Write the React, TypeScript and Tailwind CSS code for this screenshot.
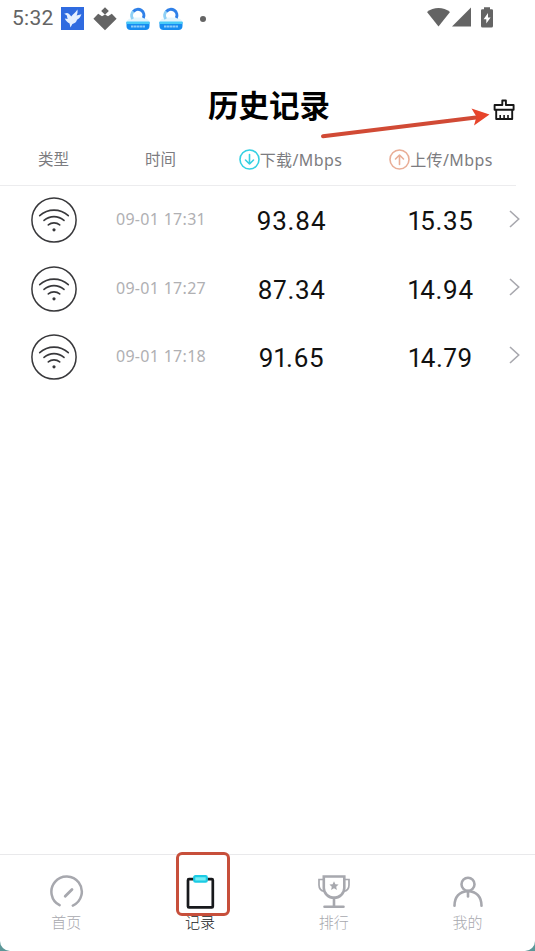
import type { ReactNode } from 'react';

interface SpeedRecord {
  id: number;
  time: string;
  download: string;
  upload: string;
}

const records: SpeedRecord[] = [
  { id: 1, time: '09-01 17:31', download: '93.84', upload: '15.35' },
  { id: 2, time: '09-01 17:27', download: '87.34', upload: '14.94' },
  { id: 3, time: '09-01 17:18', download: '91.65', upload: '14.79' },
];

function BirdIcon() {
  return (
    <svg className="w-[23px] h-[23px]" viewBox="0 0 23 23">
      <rect width="23" height="23" fill="#2f6be0" />
      <path
        d="M3.2 6.8L5.8 6.1C7.6 6.2 8.6 7.8 10.2 9.4C11.6 7.2 14.4 5.6 16.4 2.4C16.8 4.6 16.6 6.4 15.6 8.6L20.4 7.2C19.6 9.6 18.4 11.4 16 12.8C15.4 15 14 16.4 11.4 17L9.4 20.6L8.6 16.4C6.2 15.4 4.6 13.8 3.8 11.6L6.8 12C6 10.4 6.2 9.2 5.6 8.2Z"
        fill="#e4efff"
      />
    </svg>
  );
}

function DiamondIcon() {
  return (
    <svg className="w-[24px] h-[24px]" viewBox="0 0 24 24" fill="#646464">
      <path d="M12 0.2L15.8 4L12 7.8L8.2 4Z" />
      <path d="M5.2 6.8L9 9.2L12 7.4L15 9.2L18.8 6.8L23.6 11.8L12 23.3L0.4 11.8Z" />
    </svg>
  );
}

function CleanerIcon() {
  return (
    <svg className="w-[24px] h-[24px]" viewBox="0 0 24 24">
      <path d="M0.8 15.5C0.8 12 4 10.5 12 10.5C20 10.5 23.2 12 23.2 15.5Z" fill="#e3f5fd" />
      <path d="M6.7 12A5.9 5.9 0 0 1 7.6 4.2" fill="none" stroke="#8fd0f5" strokeWidth="3" />
      <path d="M7.4 4.4A6 6 0 0 1 17.3 11" fill="none" stroke="#2f80e8" strokeWidth="3" />
      <path d="M0.5 15H23.5V19C23.5 21.8 22 23 19.5 23H4.5C2 23 0.5 21.8 0.5 19Z" fill="#168cf0" />
      <path d="M0.5 14.5H23.5V17H0.5Z" fill="#48cbf8" />
      <path d="M5 19.6H19" stroke="#8accfa" strokeWidth="2" strokeDasharray="2.6 0.4" />
    </svg>
  );
}

function StatusBar() {
  return (
    <div className="flex h-[37px] items-center pl-3 pr-10">
      <span className="w-[49px] text-[21px] leading-none tracking-[0.3px] text-[#646464] font-['Roboto',sans-serif]">
        5:32
      </span>
      <div className="flex items-center gap-[9px]">
        <BirdIcon />
        <DiamondIcon />
        <CleanerIcon />
        <CleanerIcon />
      </div>
      <span className="ml-[17px] h-[6px] w-[6px] rounded-full bg-[#646464]" />
      <div className="ml-auto flex items-center pb-[3px]">
        <svg className="w-[23px] h-[20px]" viewBox="0 0 23 20" fill="#646464">
          <path d="M0 5C6.5-0.5 16.5-0.5 23 5L11.5 19.5Z" />
        </svg>
        <svg className="ml-[2px] w-[19px] h-[20px]" viewBox="0 0 19 20" fill="#646464">
          <path d="M19 0.5V19.5H0Z" />
        </svg>
        <svg className="ml-[10px] mr-[2px] w-[12px] h-[21px]" viewBox="0 0 12 21">
          <path
            d="M3 0.3H9V2.2H10.8Q12 2.2 12 3.4V19Q12 20.5 10.5 20.5H1.5Q0 20.5 0 19V3.4Q0 2.2 1.2 2.2H3Z"
            fill="#646464"
          />
          <path d="M7 6L2.6 12.2H5.3V16.6L9.6 10.5H7Z" fill="#fff" />
        </svg>
      </div>
    </div>
  );
}

function BroomIcon() {
  return (
    <svg
      className="w-[22px] h-[22px]"
      viewBox="0 0 22 22"
      fill="none"
      stroke="#171717"
      strokeWidth="1.9"
      strokeLinejoin="round"
    >
      <path d="M9.3 6V1.5H12.9V6H20.6V10.8H1.6V6Z" />
      <path d="M3.2 10.8V20H19.2V10.8" />
      <path d="M7.2 19.5V16M11.1 19.5V16M15 19.5V16" strokeWidth="1.6" />
    </svg>
  );
}

function DirectionIcon({ up }: { up?: boolean }) {
  return (
    <svg
      className="w-[21px] h-[21px] shrink-0"
      viewBox="0 0 21 21"
      fill="none"
      stroke={up ? '#e9ae97' : '#35d0e2'}
      strokeWidth="1.6"
      strokeLinecap="round"
      strokeLinejoin="round"
    >
      <circle cx="10.5" cy="10.5" r="9.5" />
      {up ? (
        <path d="M10.5 15.5V6M6.5 10L10.5 6L14.5 10" />
      ) : (
        <path d="M10.5 5.5V15M6.5 11L10.5 15L14.5 11" />
      )}
    </svg>
  );
}

function WifiBadge() {
  return (
    <svg className="w-[46px] h-[46px]" viewBox="0 0 46 46" fill="none" stroke="#38383b">
      <circle cx="23" cy="23" r="22.1" strokeWidth="1.5" />
      <g strokeWidth="1.6" strokeLinecap="round">
        <path d="M8.7 18.6C17 11.3 29 11.3 37.3 18.6" />
        <path d="M13 23.4C19 18.4 27 18.4 33 23.4" />
        <path d="M17.3 27.9C20.5 25.2 25.5 25.2 28.7 27.9" />
      </g>
      <circle cx="23" cy="32.8" r="1.6" fill="#38383b" stroke="none" />
    </svg>
  );
}

function RecordRow({ record }: { record: SpeedRecord }) {
  return (
    <li className="flex h-[68.4px] items-center">
      <div className="flex w-[107px] justify-center">
        <WifiBadge />
      </div>
      <span className="mb-[2px] w-[108px] text-center text-[16px] leading-5 tracking-[0.3px] whitespace-nowrap text-[#b0b0b3] font-['Noto_Sans',sans-serif]">
        {record.time}
      </span>
      <span className="mt-[2px] w-[153px] text-center text-[26px] leading-8 tracking-[0.65px] proportional-nums text-[#111] font-['Roboto',sans-serif]">
        {record.download}
      </span>
      <span className="mt-[2px] w-[146px] text-center text-[26px] leading-8 tracking-[0.65px] proportional-nums text-[#111] font-['Roboto',sans-serif]">
        {record.upload}
      </span>
      <svg
        className="mb-[3px] ml-[-5px] w-[11px] h-[18px]"
        viewBox="0 0 11 18"
        fill="none"
        stroke="#a8a8ae"
        strokeWidth="1.6"
      >
        <path d="M1 1L9.7 9L1 17" />
      </svg>
    </li>
  );
}

interface TabProps {
  label: string;
  active?: boolean;
  children: ReactNode;
}

function Tab({ label, active, children }: TabProps) {
  return (
    <button
      className={`flex flex-1 flex-col items-center pt-[19px] ${
        active ? 'text-[#17191c]' : 'text-[#a7a8ae]'
      }`}
    >
      <svg className="w-[34px] h-[36px]" viewBox="0 0 34 36" fill="none" stroke="currentColor">
        {children}
      </svg>
      <span className="mt-[2px] mr-[1px] text-[15px] leading-5 font-light">{label}</span>
    </button>
  );
}

export default function App() {
  return (
    <div className="h-[951px] w-[535px] overflow-hidden bg-[#5b9798] font-['Noto_Sans','Noto_Sans_CJK_SC',sans-serif]">
      <div className="relative flex h-full flex-col rounded-b-[10px] bg-white">
        <StatusBar />

        <header className="grid h-[104px] grid-cols-[1fr_auto_1fr] pt-[46px] pr-[20px]">
          <h1 className="col-start-2 ml-[23px] text-[30.5px] leading-[44px] font-bold text-black">历史记录</h1>
          <button className="mt-[16px] h-[22px] justify-self-end">
            <BroomIcon />
          </button>
        </header>

        {/* Column titles */}
        <div className="mr-[19px] flex h-[45px] items-center border-b border-[#ececee] pb-[7px] text-[15.5px] text-[#7c7c80]">
          <span className="w-[107px] text-center">类型</span>
          <span className="w-[107px] text-center">时间</span>
          <div className="flex w-[153px] items-center justify-center">
            <DirectionIcon />
            <span className="text-[16px] tracking-[0.4px]">下载/Mbps</span>
          </div>
          <div className="flex w-[148px] items-center justify-center">
            <DirectionIcon up />
            <span className="text-[16px] tracking-[0.4px]">上传/Mbps</span>
          </div>
        </div>

        <ul>
          {records.map((record) => (
            <RecordRow key={record.id} record={record} />
          ))}
        </ul>

        {/* Bottom tabs */}
        <nav className="mt-auto flex h-[97px] border-t border-[#e9e9eb]">
          <Tab label="首页">
            <g strokeWidth="2.5" strokeLinecap="round">
              <path d="M9.6 31.2A15.2 15.2 0 1 1 22.8 31.6" />
              <path d="M15.2 22.3L22 15.4" strokeWidth="2.8" />
            </g>
          </Tab>
          <Tab label="记录" active>
            <rect x="4" y="5.2" width="24.8" height="28.2" rx="1" strokeWidth="2.7" />
            <rect x="10.2" y="2.2" width="12.6" height="5.4" rx="1.2" stroke="#1ccbe4" strokeWidth="2.2" fill="#75eef5" />
          </Tab>
          <Tab label="排行">
            <path d="M6.8 2.5H27.3V14C27.3 19.5 22.5 23.8 17 23.8C11.6 23.8 6.8 19.5 6.8 14Z" strokeWidth="2.6" />
            <path d="M6.8 5.5H2V11C2 15 4 16.8 7.5 17.5M27.3 5.5H32V11C32 15 30 16.8 26.6 17.5" strokeWidth="1.7" />
            <path d="M17 23.8V32.5M7.5 32.8H26.5" strokeWidth="2.6" strokeLinecap="round" />
            <path
              d="M17 7.2L18.4 10.3L21.6 10.6L19.2 12.8L19.9 16L17 14.3L14.1 16L14.8 12.8L12.4 10.6L15.6 10.3Z"
              fill="currentColor"
              stroke="none"
            />
          </Tab>
          <Tab label="我的">
            <g strokeWidth="2.6" strokeLinecap="round">
              <circle cx="17" cy="10.2" r="6.5" />
              <path d="M3.5 31.8C3.5 23 8.5 17.2 17 17.2C25.5 17.2 30.5 23 30.5 31.8" />
              <path d="M17 17V22.5" />
            </g>
          </Tab>
        </nav>

        {/* Highlights: clear button arrow and current tab */}
        <svg
          className="pointer-events-none absolute top-[104px] left-[318px] w-[174px] h-[36px]"
          viewBox="0 0 174 36"
        >
          <path d="M5 32.3L158 13.4" stroke="#d14a35" strokeWidth="4" strokeLinecap="round" />
          <path d="M171.5 10.5L153.5 4.5L158.5 12.8L156 21.5Z" fill="#e7442b" />
        </svg>
        <div className="pointer-events-none absolute top-[852px] left-[176px] h-[64px] w-[54px] rounded-[6px] border-[3px] border-[#c74f3b]" />
      </div>
    </div>
  );
}
